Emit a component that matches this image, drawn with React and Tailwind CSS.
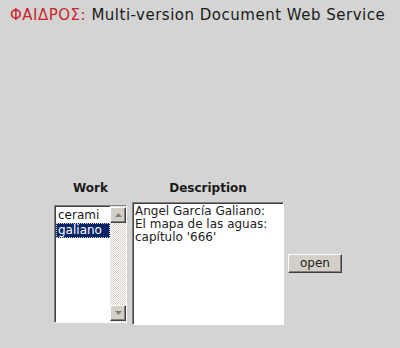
import React from "react";

const WORKS = ["cerami", "galiano"];

function ScrollButton({ down }) {
  return (
    <div className="flex h-[16px] w-[16px] items-center justify-center border border-t-white border-l-white border-r-[#404040] border-b-[#404040] bg-[#d4d0c8] shadow-[inset_-1px_-1px_0_#808080]">
      <svg width="7" height="4" viewBox="0 0 7 4">
        {down ? (
          <polygon points="0,0 7,0 3.5,4" fill="#808080" />
        ) : (
          <polygon points="0,4 7,4 3.5,0" fill="#808080" />
        )}
      </svg>
    </div>
  );
}

export default function App() {
  return (
    <div className="h-[348px] w-[400px] overflow-hidden bg-[#d4d4d4] font-['DejaVu_Sans',sans-serif]">
      <div className="pl-[10px] pt-[6px] text-[15px] leading-[18px] tracking-[0.5px]">
        <span className="text-[#c8262a]">ΦΑΙΔΡΟΣ:</span>{" "}
        <span className="text-[#1a1a1a]">Multi-version Document Web Service</span>
      </div>

      <div className="ml-[54px] mt-[157px]">
        <div className="flex text-[12px] font-bold leading-[14px] text-[#1a1a1a]">
          <div className="w-[73px] text-center">Work</div>
          <div className="ml-[5px] w-[152px] text-center">Description</div>
        </div>

        <div className="mt-[7px] flex items-center">
          <div className="flex h-[118px] w-[73px] border border-t-[#808080] border-l-[#808080] border-r-white border-b-white bg-white shadow-[inset_1px_1px_0_#404040]">
            <div className="flex-1 pl-[1px] pt-[2px] text-[12px] leading-[13px]">
              {WORKS.map((w, i) => (
                <div
                  key={w}
                  className={
                    i === 1
                      ? "border border-dotted border-[#d4d0c8] bg-[#0a246a] pl-[1px] text-white"
                      : "border border-transparent pl-[1px] text-[#1a1a1a]"
                  }
                >
                  {w}
                </div>
              ))}
            </div>
            <div className="flex w-[16px] flex-col bg-[repeating-conic-gradient(#ffffff_0_25%,#d4d0c8_0_50%)] bg-[length:2px_2px] py-[1px]">
              <ScrollButton />
              <div className="flex-1" />
              <ScrollButton down />
            </div>
          </div>

          <div className="ml-[5px] h-[123px] w-[152px] border border-t-[#808080] border-l-[#808080] border-r-white border-b-white bg-white px-[2px] pt-[2px] text-[12px] leading-[13px] text-[#222] shadow-[inset_1px_1px_0_#404040]">
            Angel García Galiano:
            <br />
            El mapa de las aguas:
            <br />
            capítulo '666'
          </div>

          <button className="ml-[4px] h-[19px] w-[54px] border border-t-white border-l-white border-r-[#404040] border-b-[#404040] bg-[#d4d0c8] text-[12px] leading-[15px] text-[#222] shadow-[inset_-1px_-1px_0_#808080]">
            open
          </button>
        </div>
      </div>
    </div>
  );
}
